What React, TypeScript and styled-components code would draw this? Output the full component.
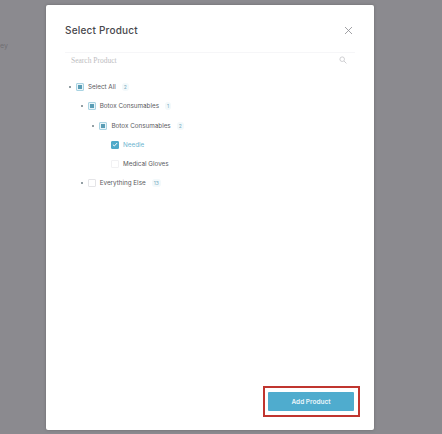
import React from 'react'
import styled, { createGlobalStyle } from 'styled-components';

const GlobalStyle = createGlobalStyle`
	html, body {
		margin: 0;
		padding: 0;
		background: #8b8a8f;
		font-family: Inter, "Liberation Sans", sans-serif;
	}
`;

const Page = styled.div`
	display: flex;
	align-items: flex-start;
	width: 442px;
	height: 434px;
	overflow: hidden;
	background: #8b8a8f;
`;

const Backdrop = styled.div`
	width: 46px;
	padding-top: 40px;
	font-size: 7px;
	line-height: 12px;
	color: #6f6f73;
	flex: none;
	overflow: hidden;
	white-space: nowrap;
`;

const Modal = styled.div`
	display: flex;
	flex-direction: column;
	width: 328px;
	height: 425px;
	margin-top: 5px;
	padding: 17px 14px 13px 19px;
	box-sizing: border-box;
	background: #fff;
	border-radius: 2px;
	box-shadow: 0 0 3px rgba(60, 60, 60, 0.4);
`;

const Header = styled.div`
	display: flex;
	justify-content: space-between;
	align-items: center;
	height: 16px;
	margin: 0 5px 14px 0;
`;

const Title = styled.h2`
	margin: 0;
	font-size: 10px;
	font-weight: 500;
	letter-spacing: 0.2px;
	color: #47474c;
`;

const Close = styled.button`
	display: flex;
	padding: 0;
	margin-right: 2px;
	border: 0;
	background: none;
	color: #8a8a8f;
`;

const Search = styled.div`
	display: flex;
	justify-content: space-between;
	align-items: center;
	height: 14px;
	padding: 0 8px 0 6px;
	margin: 0 5px 12.5px 0;
	border-top: 1px solid #f6f6f8;
	font-family: "Liberation Serif", serif;
	font-size: 7.5px;
	color: #bdbdc1;
`;

const Tree = styled.div`
	display: flex;
	flex-direction: column;
	gap: 4.3px;
	flex: 1;
`;

const Row = styled.div<{ $level: number }>`
	display: flex;
	align-items: center;
	height: 15px;
	padding-left: ${p => p.$level * 11.7 + 4}px;
`;

const Caret = styled.span<{ $hidden?: boolean }>`
	width: 2px;
	height: 2px;
	margin-right: 5px;
	border-radius: 50%;
	background: ${p => (p.$hidden ? 'transparent' : '#6f7f86')};
`;

const Check = styled.span<{ $state: 'some' | 'all' | 'none' | 'faint' }>`
	display: flex;
	align-items: center;
	justify-content: center;
	box-sizing: border-box;
	width: 8px;
	height: 8px;
	flex: none;
	border: 1px solid ${p => (p.$state === 'some' ? '#a9d3e2' : p.$state === 'all' ? '#4fa9c9' : p.$state === 'faint' ? '#f1f1f3' : '#e4e4e7')};
	background: ${p => (p.$state === 'all' ? '#4fa9c9' : p.$state === 'some' ? '#e9f5f9' : '#fff')};
	border-radius: 1px;

	&::after {
		content: '';
		display: ${p => (p.$state === 'some' ? 'block' : 'none')};
		width: 4px;
		height: 4px;
		background: #5a9db5;
	}
`;

const Label = styled.span<{ $active?: boolean }>`
	margin-left: 4px;
	font-size: 6.3px;
	color: ${p => (p.$active ? '#6db4cf' : '#5a5a60')};
`;

const Count = styled.span`
	margin-left: 6px;
	padding: 0 2px;
	font-size: 5px;
	line-height: 8px;
	color: #7aaebf;
	background: #f3f9fb;
	border-radius: 3px;
`;

const Footer = styled.div`
	display: flex;
	justify-content: flex-end;
`;

const Highlight = styled.div`
	display: flex;
	padding: 4px 4px 4px 3px;
	border: 2px solid #c0352f;
`;

const AddButton = styled.button`
	width: 86px;
	height: 19px;
	padding: 0;
	border: 0;
	border-radius: 1px;
	background: #4facce;
	color: #eaf6fb;
	font-family: inherit;
	font-size: 6.5px;
	font-weight: 600;
`;

const items = [
	{ level: 0, label: 'Select All', state: 'some', count: '2' },
	{ level: 1, label: 'Botox Consumables', state: 'some', count: '1' },
	{ level: 2, label: 'Botox Consumables', state: 'some', count: '2' },
	{ level: 3, label: 'Needle', state: 'all', active: true, noCaret: true },
	{ level: 3, label: 'Medical Gloves', state: 'faint', noCaret: true },
	{ level: 1, label: 'Everything Else', state: 'none', count: '13' },
] as const;

const App = () => {
	return (
		<Page>
			<GlobalStyle />
			<Backdrop>ey</Backdrop>
			<Modal>
				<Header>
					<Title>Select Product</Title>
					<Close aria-label="Close">
						<svg width="9" height="9" viewBox="0 0 9 9" fill="none" stroke="currentColor" strokeWidth="0.8">
							<path d="M1 1l7 7M8 1l-7 7" />
						</svg>
					</Close>
				</Header>
				<Search>
					<span>Search Product</span>
					<svg width="8" height="8" viewBox="0 0 8 8" fill="none" stroke="#c4c4c8" strokeWidth="0.8">
						<circle cx="3.2" cy="3.2" r="2.3" />
						<path d="M5 5l2.4 2.4" />
					</svg>
				</Search>
				<Tree>
					{items.map((item, i) => (
						<Row key={i} $level={item.level}>
							<Caret $hidden={'noCaret' in item} />
							<Check $state={item.state}>
								{item.state === 'all' && (
									<svg width="7" height="7" viewBox="0 0 7 7" fill="none" stroke="#fff" strokeWidth="1.1">
										<path d="M1 3.6l1.7 1.7L6 1.8" />
									</svg>
								)}
							</Check>
							<Label $active={'active' in item}>{item.label}</Label>
							{'count' in item && <Count>{item.count}</Count>}
						</Row>
					))}
				</Tree>
				<Footer>
					<Highlight>
						<AddButton>Add Product</AddButton>
					</Highlight>
				</Footer>
			</Modal>
		</Page>
	)
}

export default App
